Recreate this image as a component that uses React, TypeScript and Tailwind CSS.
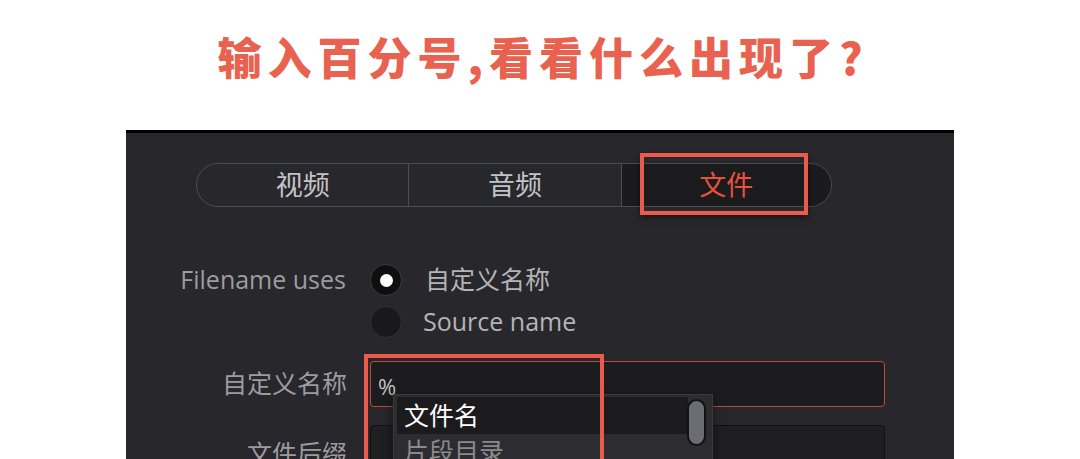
import React from "react";

const tabs = [
  { name: "视频", width: "w-[212px]" },
  { name: "音频", width: "w-[213px]" },
  { name: "文件", width: "w-[211px]" },
];

const ui = { fontFamily: '"Open Sans", "Noto Sans CJK SC", sans-serif' };

function Radio({ checked }: { checked?: boolean }) {
  return checked ? (
    <span className="flex h-[32px] w-[32px] items-center justify-center rounded-full border border-[#3a3a3e] bg-[#0f0f10]">
      <span className="h-[13px] w-[13px] rounded-full bg-white" />
    </span>
  ) : (
    <span className="h-[32px] w-[32px] rounded-full border border-[#323236] bg-[#19191b]" />
  );
}

export default function App() {
  return (
    <div className="h-[459px] w-[1080px] overflow-hidden bg-white" style={ui}>
      {/* heading */}
      <div className="flex h-[112px] items-center justify-center">
        <h1
          className="pl-[6px] text-[44px] font-black leading-none tracking-[6px] text-[#e8624f]"
          style={{ fontFamily: '"Noto Sans CJK SC", sans-serif' }}
        >
          输入百分号,看看什么出现了?
        </h1>
      </div>

      <div className="mx-auto mt-[18px] h-[329px] w-[828px] border-t-[3px] border-black bg-[#28272c]">
        {/* tab bar */}
        <div className="relative ml-[70px] mt-[30px] flex h-[44px] w-[636px] overflow-hidden rounded-full border-[1.5px] border-[#4a4d52]">
          {tabs.map((tab, i) => (
            <div
              key={tab.name}
              className={`flex ${tab.width} items-center justify-center text-[27px] ${
                i > 0 ? "border-l-[1.5px] border-[#4a4d52]" : ""
              } ${i === 2 ? "bg-[#1b1b1d] text-[#e8503f]" : "text-[#c4c4c6]"}`}
            >
              {tab.name}
            </div>
          ))}
        </div>
        <div className="relative ml-[70px] h-0 w-[636px]">
          <div className="absolute left-[444px] top-[-54px] h-[62px] w-[168px] border-4 border-[#ea5a4d] shadow-[0_2px_6px_rgba(0,0,0,0.5)]" />
        </div>

        {/* form */}
        <div className="mt-[57px] flex flex-col text-[25px]">
          <div className="flex h-[32px] items-center">
            <span className="w-[221px] pr-[1px] text-right text-[#9c9c9f]">Filename uses</span>
            <span className="ml-[23px] flex items-center gap-[23px]">
              <Radio checked />
              <span className="text-[#b4b4b6]">自定义名称</span>
            </span>
          </div>
          <div className="mt-[10px] flex h-[32px] items-center">
            <span className="w-[221px]" />
            <span className="ml-[23px] flex items-center gap-[21px]">
              <Radio />
              <span className="text-[#b4b4b6]">Source name</span>
            </span>
          </div>

          <div className="mt-[23px] flex h-[46px] items-center">
            <span className="w-[221px] text-right text-[#9c9c9f]">自定义名称</span>
            <div className="relative ml-[23px] h-[46px] w-[515px] rounded-[4px] border-[1.5px] border-[#c4463c] bg-[#1c1b1e]">
              <span className="absolute left-[7px] top-[8px] text-[22px] text-[#c2c2c4]">%</span>

              {/* suggestions */}
              <div className="absolute left-[22px] top-[32px] z-10 h-[90px] w-[320px] border border-[#3a393e] bg-[#2d2c31] shadow-[0_4px_10px_rgba(0,0,0,0.5)]">
                <div className="ml-[3px] mt-[2px] flex h-[37px] w-[291px] items-center bg-[#1b1b1d] pl-[7px] text-[25px] text-white">
                  文件名
                </div>
                <div className="flex h-[36px] items-center pl-[10px] text-[25px] text-[#8a8a8d]">片段目录</div>
                <div className="absolute right-[6px] top-[4px] h-[47px] w-[19px] rounded-full border-2 border-[#111] bg-[#6b6d73]" />
              </div>

              <div className="absolute left-[-7px] top-[-8px] z-20 h-[120px] w-[240px] border-4 border-[#ea5a4d]" />
            </div>
          </div>

          <div className="mt-[18px] flex h-[46px] items-start">
            <span className="w-[221px] pt-[10px] text-right text-[#9c9c9f]">文件后缀</span>
            <div className="ml-[23px] h-[46px] w-[515px] rounded-[4px] border border-[#111] bg-[#1f1e21]" />
          </div>
        </div>
      </div>
    </div>
  );
}
